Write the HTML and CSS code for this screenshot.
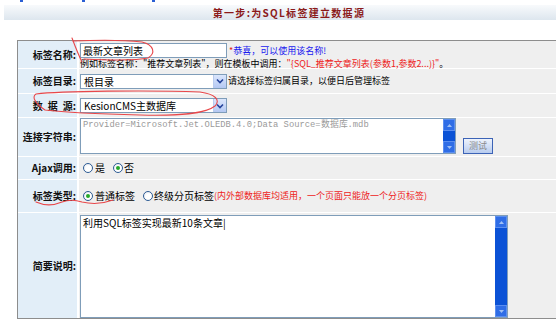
FILE: index.html
```html
<!DOCTYPE html>
<html lang="zh-CN">
<head>
<meta charset="utf-8">
<title>第一步:为SQL标签建立数据源</title>
<link rel="stylesheet" href="styles.css">
</head>
<body>
<div class="page">
  <div class="topstrip"><i class="frag f1"></i><i class="frag f2"></i><i class="frag f3"></i></div>
  <div class="step-title">第一步:为SQL标签建立数据源</div>

  <div class="form">
    <div class="label">标签名称:</div>
    <div class="field col">
      <div class="line">
        <input class="text" type="text" value="最新文章列表">
        <span class="ok"><span class="star">*</span>恭喜，可以使用该名称!</span>
      </div>
      <div class="hint">例如标签名称："推荐文章列表"，则在模板中调用：<span class="red">"{SQL_推荐文章列表(参数1,参数2...)}"</span>。</div>
    </div>

    <div class="label">标签目录:</div>
    <div class="field">
      <div class="select"><span class="val">根目录</span><span class="arrow"><svg width="8" height="6" viewBox="0 0 8 6"><path d="M1 1.5 L4 4.5 L7 1.5" fill="none" stroke="#24429a" stroke-width="1.6"/></svg></span></div>
      <span class="plain">请选择标签归属目录，以便日后管理标签</span>
    </div>

    <div class="label">数&ensp;据&ensp;源:</div>
    <div class="field">
      <div class="select"><span class="val">KesionCMS主数据库</span><span class="arrow"><svg width="8" height="6" viewBox="0 0 8 6"><path d="M1 1.5 L4 4.5 L7 1.5" fill="none" stroke="#24429a" stroke-width="1.6"/></svg></span></div>
    </div>

    <div class="label">连接字符串:</div>
    <div class="field conn">
      <div class="tbox small">
        <textarea class="mono" readonly>Provider=Microsoft.Jet.OLEDB.4.0;Data Source=数据库.mdb</textarea>
        <div class="sb"><span class="sbtn"><svg width="5" height="3" viewBox="0 0 5 3"><path d="M0 3 L2.5 0 L5 3Z" fill="#9fc0f5"/></svg></span><span class="track"></span><span class="sbtn"><svg width="5" height="3" viewBox="0 0 5 3"><path d="M0 0 L2.5 3 L5 0Z" fill="#9fc0f5"/></svg></span></div>
      </div>
      <button class="btn-test" type="button">测试</button>
    </div>

    <div class="label">Ajax调用:</div>
    <div class="field radios">
      <label class="opt"><input class="radio" type="radio" name="ajax">是</label>
      <label class="opt gap"><input class="radio" type="radio" name="ajax" checked>否</label>
    </div>

    <div class="label">标签类型:</div>
    <div class="field radios">
      <label class="opt"><input class="radio" type="radio" name="kind" checked>普通标签</label>
      <label class="opt gap"><input class="radio" type="radio" name="kind">终级分页标签</label><span class="red">(内外部数据库均适用，一个页面只能放一个分页标签)</span>
    </div>

    <div class="label">简要说明:</div>
    <div class="field desc">
      <div class="tbox big">
        <textarea class="body-text">利用SQL标签实现最新10条文章|</textarea>
        <div class="sb"><span class="sbtn"><svg width="5" height="3" viewBox="0 0 5 3"><path d="M0 3 L2.5 0 L5 3Z" fill="#9fc0f5"/></svg></span><span class="track"></span><span class="sbtn"><svg width="5" height="3" viewBox="0 0 5 3"><path d="M0 0 L2.5 3 L5 0Z" fill="#9fc0f5"/></svg></span></div>
      </div>
    </div>
  </div>

  <svg class="marks" width="556" height="326" viewBox="0 0 556 326">
    <g fill="none" stroke="#e8474a" stroke-width="1.1" stroke-linecap="round">
      <path d="M72 38 C75 46 78 54 82 62"/>
      <path d="M73 41 C95 40 125 40 142 42 C154 45 156 53 148 58 C135 61 105 60 84 59"/>
      <path d="M45 110 C36 104 31 97 36 94 C60 91 150 90 200 92 C215 94 221 100 215 106 C205 114 180 116 140 115 C100 114 70 113 45 110"/>
      <path d="M36 202 C45 206 55 205 62 202 C70 199 76 200 82 202 C95 205 105 203 113 200"/>
    </g>
  </svg>
</div>
</body>
</html>
```
FILE: styles.css
```css
html, body {
  margin: 0;
  padding: 0;
  overflow: hidden;
  background: #fff;
}
body {
  width: 556px;
  height: 326px;
  font-family: "Noto Sans CJK SC", "Noto Sans", sans-serif;
  font-size: 10px;
  line-height: 12px;
  color: #000;
}
.page {
  position: relative;
  width: 556px;
  height: 326px;
  overflow: hidden;
}
.topstrip {
  height: 3px;
  display: flex;
}
.frag {
  width: 3px;
  height: 2px;
  background: #2a5fd4;
}
.f1 { margin-left: 20px; }
.f2 { margin-left: 59px; }
.f3 { margin-left: 67px; }

.step-title {
  margin: 2px 0 0 4px;
  padding-left: 18px;
  height: 15px;
  line-height: 15px;
  text-align: center;
  background: linear-gradient(#f8fafc, #dde6ee);
  color: #8b1a1a;
  font-weight: bold;
  font-size: 10px;
  letter-spacing: 1.3px;
}

.form {
  margin: 20px 0 0 17px;
  width: 640px;
  display: grid;
  grid-template-columns: 59px 1fr;
  grid-template-rows: 27px 24px 23px 38px 22px 32px 105px;
  gap: 1px 2px;
  background: #fff;
  border: 1px solid #8d8d8d;
}
.label {
  background: #e2eef8;
  display: flex;
  align-items: center;
  justify-content: flex-end;
  font-weight: bold;
  padding-right: 1px;
  white-space: nowrap;
  color: #111;
}
.field {
  background: #efefef;
  display: flex;
  align-items: center;
  padding-left: 1px;
  white-space: nowrap;
}
.field.col {
  flex-direction: column;
  align-items: flex-start;
  justify-content: flex-start;
  padding-top: 2px;
}
.line {
  display: flex;
  align-items: center;
}
input.text {
  width: 147px;
  height: 15px;
  box-sizing: border-box;
  border: 1px solid #7f9db9;
  margin: 0;
  padding: 0 2px;
  font-family: "Noto Sans CJK SC", sans-serif;
  font-size: 10px;
  color: #000;
  background: #fff;
}
.ok {
  margin-left: 2px;
  color: #1a1af0;
  font-size: 9px;
}
.star { color: #e02020; }
.hint {
  margin-top: 1px;
  font-size: 9px;
  line-height: 10px;
}
.red { color: #ee2222; font-size: 9px; }

.select {
  width: 147px;
  height: 15px;
  box-sizing: border-box;
  border: 1px solid #7f9db9;
  background: #fff;
  display: flex;
}
.select .val {
  flex: 1;
  padding-left: 3px;
  line-height: 13px;
  font-size: 10px;
}
.select .arrow {
  width: 12px;
  background: linear-gradient(#dbe6fc, #b4c8f3);
  border-left: 1px solid #b9cbee;
  display: flex;
  align-items: center;
  justify-content: center;
}
.plain {
  margin-left: 1px;
  font-size: 9px;
}

.field.conn {
  align-items: flex-end;
  padding-bottom: 2px;
}
.tbox {
  display: flex;
  box-sizing: border-box;
  border: 1px solid #7f9db9;
  background: #fff;
}
.tbox.small { width: 376px; height: 36px; }
.tbox.big { width: 428px; height: 103px; }
.tbox textarea {
  flex: 1;
  border: 0;
  margin: 0;
  padding: 1px 2px;
  resize: none;
  outline: none;
  overflow: hidden;
  background: transparent;
}
textarea.mono {
  font-family: "Liberation Mono", monospace;
  font-size: 8.8px;
  line-height: 11px;
  color: #9a9a9a;
}
textarea.body-text {
  font-family: "Noto Sans CJK SC", sans-serif;
  font-size: 10px;
  line-height: 12px;
  color: #000;
}
.sb {
  width: 12px;
  display: flex;
  flex-direction: column;
  background: #0b52d6;
}
.sbtn {
  height: 12px;
  box-sizing: border-box;
  border: 1px solid #5b8ef0;
  background: #2f6de6;
  display: flex;
  align-items: center;
  justify-content: center;
}
.track { flex: 1; }
.btn-test {
  width: 30px;
  height: 16px;
  margin: 0 0 0 7px;
  padding: 0;
  box-sizing: border-box;
  border: 1px solid #3c63b6;
  background: linear-gradient(#eef3fc, #b8ccef);
  color: #8c8c8c;
  font-family: "Noto Sans CJK SC", sans-serif;
  font-size: 9px;
  line-height: 12px;
}

.field.radios { padding-left: 4px; }
.opt {
  display: flex;
  align-items: center;
  gap: 1px;
}
.opt.gap { margin-left: 8px; }
.field.radios .opt:first-child { gap: 2px; }
.radio {
  appearance: none;
  -webkit-appearance: none;
  margin: 0;
  width: 10px;
  height: 10px;
  box-sizing: border-box;
  border: 1px solid #2c5b94;
  border-radius: 50%;
  background: radial-gradient(circle at 60% 60%, #fff 40%, #dfe3ea);
  display: inline-flex;
  align-items: center;
  justify-content: center;
}
.radio:checked::after {
  content: "";
  width: 4px;
  height: 4px;
  border-radius: 50%;
  background: #25a82a;
}

.field.desc {
  align-items: flex-start;
  padding-top: 2px;
}

.marks {
  position: absolute;
  left: 0;
  top: 0;
  pointer-events: none;
}
```
